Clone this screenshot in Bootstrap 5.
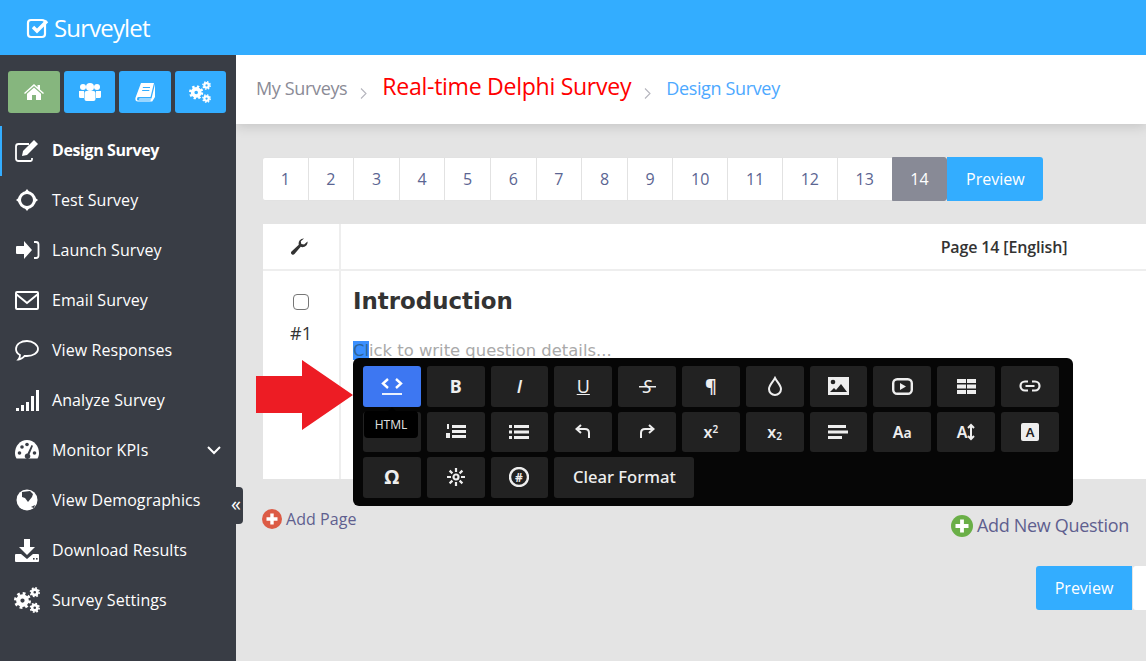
<!DOCTYPE html>
<html lang="en">
<head>
  <meta charset="UTF-8">
  <title>Surveylet</title>
  <link href="https://cdn.jsdelivr.net/npm/bootstrap@5.3.0/dist/css/bootstrap.min.css" rel="stylesheet">
  <style>
    html, body { height: 100%; }
    body {
      font-family: "Open Sans", sans-serif;
      background: #e4e4e4;
      overflow: hidden;
      color: #333;
    }
    .top-bar { height: 55px; background: #33adff; color: #fff; padding-left: 26px; }
    .brand-name { font-size: 24px; letter-spacing: -0.85px; margin-left: 4px; }
    .page-body { height: 606px; }

    .side-bar { width: 236px; background: #393d45; color: #fff; position: relative; flex-shrink: 0; }
    .side-tabs { padding: 16px 10px 13px 8px; gap: 4px; height: 71px; }
    .side-tab { width: 51.5px; height: 42px; background: #33adff; border-radius: 3px; }
    .side-tab.is-home { width: 52px; background: #86b67e; }
    .side-link { height: 50px; padding: 0 0 2px 14px; color: #fff; font-size: 16px; text-decoration: none; letter-spacing: 0.08px; }
    .side-link.is-active { border-left: 2px solid #33adff; padding-left: 12px; font-weight: 700; letter-spacing: -0.4px; }
    .side-ico { width: 26px; height: 26px; margin-right: 12px; flex-shrink: 0; }
    .side-caret { margin-left: auto; margin-right: 15px; }
    .side-handle {
      position: absolute; left: 229px; top: 432px; width: 14px; height: 37px;
      background: #393d45; border-radius: 0 4px 4px 0; font-size: 20px; line-height: 34px; text-align: center; color: #fff;
    }

    .main-area { position: relative; flex: 1; min-width: 0; overflow: hidden; }
    .crumb-bar {
      height: 69px; background: #fff; padding-left: 20px;
      box-shadow: 0 2px 12px rgba(0,0,0,.15);
    }
    .crumb-muted { font-size: 18px; color: #8b8b96; letter-spacing: -0.35px; margin-bottom: 2px; }
    .crumb-sep { margin: 8px 15px 0 13px; }
    .crumb-title { font-size: 23.1px; color: #f00; letter-spacing: -0.3px; margin: 0 0 6px 0; }
    .crumb-here { font-size: 18px; color: #4da9ff; letter-spacing: -0.35px; margin-bottom: 2px; }

    .pager-row { padding: 33px 0 0 26px; }
    .pager-row .pagination { margin: 0; --bs-pagination-border-radius: 3px; }
    .pager-row .page-link {
      width: 46.6px; height: 44px; padding: 0; line-height: 42px; text-align: center;
      color: #5b6592; border-color: #e2e2e2; font-size: 16px;
    }
    .pager-row .page-item.is-wide .page-link { width: 55.8px; }
    .pager-row .page-item.active .page-link { background: #888a96; border-color: #888a96; color: #fff; }
    .preview-btn {
      height: 44px; width: 96px; background: #33adff; color: #fff; font-size: 16px; border: 0;
      border-radius: 0 3px 3px 0; padding: 0;
    }
    .preview-btn.is-left { border-radius: 3px 0 0 3px; }

    .survey-table { margin: 23px 0 0 27px; width: 1404px; height: 255px; background: #fff; }
    .survey-head { height: 47px; border-bottom: 2px solid #eee; }
    .survey-col { width: 78px; border-right: 2px solid #eee; flex-shrink: 0; }
    .wrench-ico { margin-right: 4px; }
    .survey-page { font-size: 16px; font-weight: 600; color: #333; letter-spacing: -0.15px; }
    .survey-row { height: 208px; }
    .survey-check { width: 16px; height: 16px; margin: 23px 0 0 0; border-color: #767676; border-radius: 3px; }
    .survey-num { font-size: 18px; color: #333; margin-top: 9px; line-height: 28px; }
    .question-cell { padding: 14px 0 0 12px; font-family: "DejaVu Sans", sans-serif; }
    .question-title { font-size: 22.9px; font-weight: 700; color: #333; line-height: 32px; margin: 0; }
    .question-hint { font-size: 16.4px; color: #a9a9a9; margin-top: 24px; line-height: 19px; }
    .question-hint span { background: #3a8fff; color: #2f6597; }

    .add-row { width: 867px; margin-left: 26px; height: 87px; }
    .add-link { color: #5f5f8f; text-decoration: none; display: flex; align-items: center; }
    .add-page { font-size: 16px; margin-top: 28px; letter-spacing: 0.05px; }
    .add-question { font-size: 18px; margin-top: 33px; letter-spacing: -0.3px; }
    .foot-row { padding-left: 800px; }
    .foot-blank { width: 90px; height: 44px; background: #fff; margin-left: 1px; border-radius: 3px; flex-shrink: 0; }

    .editor-pop {
      position: absolute; left: 117px; top: 303px; width: 720px; height: 148px;
      background: #060606; border-radius: 6px; padding: 8px 10px; gap: 5px 6px;
      font-family: "Noto Sans", sans-serif;
    }
    .editor-btn {
      width: 57.8px; height: 40.5px; background: #222; border-radius: 3px; color: #eee; border: 0; padding: 0;
      font-size: 16px; line-height: 1; display: flex; align-items: center; justify-content: center;
    }
    .editor-btn.is-on { background: #3d77f2; color: #fff; }
    .editor-btn.is-text { width: 140px; font-weight: 500; font-size: 16.6px; }
    .editor-btn.is-big { font-size: 18px; }
    .editor-btn.is-slant { font-family: "Open Sans", sans-serif; font-style: italic; font-weight: 600; font-size: 18px; }
    .editor-btn sup, .editor-btn sub { font-size: 10px; }
    .strike-pad { padding: 0 4px; font-style: italic; background: linear-gradient(#eee, #eee) center / 100% 1.5px no-repeat; }
    .editor-tip {
      position: absolute; left: 11px; top: 53px; width: 54px; height: 27px; background: #000; border-radius: 4px;
      color: #ddd; font-size: 12px; line-height: 27px; text-align: center;
    }
    .editor-tip::before {
      content: ""; position: absolute; left: 24px; top: -4px;
      border: 4px solid transparent; border-top: 0; border-bottom-color: #000;
    }
    .red-arrow { position: absolute; left: 19px; top: 304px; }
  </style>
</head>
<body>

  <svg width="0" height="0" class="position-absolute">
    <defs>
      <symbol id="gear" viewBox="0 0 24 24">
        <circle cx="12" cy="12" r="6" fill="none" stroke="currentColor" stroke-width="6"/>
        <circle cx="12" cy="12" r="10" fill="none" stroke="currentColor" stroke-width="4" stroke-dasharray="3.9 3.95"/>
      </symbol>
      <symbol id="cogs" viewBox="0 0 26 26">
        <use href="#gear" x="0" y="5" width="17" height="17"/>
        <use href="#gear" x="15.500" y="0" width="10.500" height="10.500"/>
        <use href="#gear" x="15.500" y="15.500" width="10.500" height="10.500"/>
      </symbol>
      <symbol id="chevron" viewBox="0 0 7 11">
        <path d="M1 .5L6 5.500 1 10.500" fill="none" stroke="#b5b5bd" stroke-width="1.100"/>
      </symbol>
    </defs>
  </svg>

  <header class="top-bar d-flex align-items-center">
    <svg width="24" height="24" viewBox="0 0 24 24" fill="none" stroke="#fff" stroke-width="2.2">
      <rect x="2" y="4" width="17" height="17" rx="3"/>
      <path d="M7 11l4 4 10-10" stroke-width="3.4"/>
    </svg>
    <span class="brand-name">Surveylet</span>
  </header>

  <div class="page-body d-flex">
    <aside class="side-bar">
      <div class="side-tabs d-flex">
        <div class="side-tab is-home d-flex align-items-center justify-content-center">
          <svg width="20" height="18" viewBox="0 0 20 18" fill="#fff"><path d="M10 1L0 10l1 1 9-8 9 8 1-1-4-3.6V2h-2.500v2.200z"/><path d="M10 4.500L3 10.700V17h5v-5h4v5h5v-6.300z"/></svg>
        </div>
        <div class="side-tab d-flex align-items-center justify-content-center">
          <svg width="22" height="20" viewBox="0 0 22 20" fill="#fff"><circle cx="4" cy="5" r="3"/><circle cx="18" cy="5" r="3"/><circle cx="11" cy="5" r="4"/><path d="M0 9h5v7H1.500Q0 16 0 14.500zM22 9h-5v7h3.500q1.500 0 1.500-1.500z"/><path d="M5.500 11q0-2 2-2h7q2 0 2 2v6q0 2-2 2h-7q-2 0-2-2z"/></svg>
        </div>
        <div class="side-tab d-flex align-items-center justify-content-center">
          <svg width="20" height="20" viewBox="0 0 20 20" fill="#fff"><path d="M6 1h13l-3.500 14H3.500q-1.500 0-1.500 2t1.500 1.500h12l.5-1H4.500q-.7 0-.5-.5t.7-.5H16.500L20 2v13l-2.800 4.500H3q-3 0-2.600-3.500z"/><path d="M8 5h7v1H7.700zM7.300 8h7v1H7z" fill="#33adff"/></svg>
        </div>
        <div class="side-tab d-flex align-items-center justify-content-center">
          <svg width="22" height="22" color="#fff"><use href="#cogs" width="22" height="22"/></svg>
        </div>
      </div>

      <a class="side-link is-active d-flex align-items-center" href="#">
        <svg class="side-ico" viewBox="0 0 26 26" fill="none" stroke="#fff" stroke-width="1.800"><path d="M18 21v1.500q0 1.500-1.500 1.500h-12Q2 24 2 21.500v-12Q2 7 4.500 7H15"/><path d="M9 14l-1 5 5-1L24 7l-4-4z" fill="#fff" stroke="none"/></svg>
        Design Survey
      </a>
      <a class="side-link d-flex align-items-center" href="#">
        <svg class="side-ico" viewBox="0 0 26 26" fill="none" stroke="#fff" stroke-width="3"><circle cx="13" cy="13" r="7.500"/><path d="M13 2l4 5H9zM13 24l4-5H9zM2 13l5 4V9zM24 13l-5 4V9z" fill="#fff" stroke="none"/></svg>
        Test Survey
      </a>
      <a class="side-link d-flex align-items-center" href="#">
        <svg class="side-ico" viewBox="0 0 26 26" fill="#fff"><path d="M3 9h7V4l8 9-8 9v-5H3q-1 0-1-1v-6q0-1 1-1z"/><path d="M20 5h2q2.500 0 2.500 2.500v11q0 2.500-2.500 2.500h-2" fill="none" stroke="#fff" stroke-width="1.800"/></svg>
        Launch Survey
      </a>
      <a class="side-link d-flex align-items-center" href="#">
        <svg class="side-ico" viewBox="0 0 26 26" fill="none" stroke="#fff" stroke-width="2"><rect x="2" y="5" width="22" height="17" rx="1"/><path d="M2 7l11 9 11-9"/></svg>
        Email Survey
      </a>
      <a class="side-link d-flex align-items-center" href="#">
        <svg class="side-ico" viewBox="0 0 26 26" fill="none" stroke="#fff" stroke-width="1.800"><path d="M13 4C7 4 2 7 2 12c0 3 2 5 4 6 0 2-1 4-1.500 4.500 2 0 5-2 6-3.500h2.500c6 0 11-3 11-7s-5-8-11-8z"/></svg>
        View Responses
      </a>
      <a class="side-link d-flex align-items-center" href="#">
        <svg class="side-ico" viewBox="0 0 26 26" fill="#fff"><rect x="2" y="21" width="3" height="3"/><rect x="7" y="18" width="3" height="6"/><rect x="12" y="15" width="3" height="9"/><rect x="17" y="9" width="3" height="15"/><rect x="22" y="3" width="3" height="21"/></svg>
        Analyze Survey
      </a>
      <a class="side-link d-flex align-items-center" href="#">
        <svg class="side-ico" viewBox="0 0 26 26" fill="#fff"><path d="M13 3C6 3 1 9 1 16c0 2 .5 4 1.500 5.500h21C24.500 20 25 18 25 16 25 9 20 3 13 3z"/><g fill="#393d45"><circle cx="5.500" cy="16" r="1.800"/><circle cx="8" cy="10" r="1.800"/><circle cx="13" cy="7.500" r="1.800"/><circle cx="20.500" cy="16" r="1.800"/><path d="M17.500 8l1.500.7-3.500 8.500a2.800 2.800 0 1 1-2-.8z"/></g></svg>
        Monitor KPIs
        <svg class="side-caret" width="14" height="9" viewBox="0 0 14 9" fill="none" stroke="#fff" stroke-width="2"><path d="M1 1l6 6 6-6"/></svg>
      </a>
      <a class="side-link d-flex align-items-center" href="#">
        <svg class="side-ico" viewBox="0 0 26 26"><circle cx="13" cy="13" r="10.500" fill="#fff"/><path d="M8 5l8-1 3 3-1 3-4 5-3-4-3-1zM17 20l4-2-1 3z" fill="#393d45"/></svg>
        View Demographics
      </a>
      <a class="side-link d-flex align-items-center" href="#">
        <svg class="side-ico" viewBox="0 0 26 26" fill="#fff"><path d="M10 2h6v8h5l-8 8-8-8h5z"/><path d="M2 17h5l6 5 6-5h5q1 0 1 1v6q0 1-1 1H2q-1 0-1-1v-6q0-1 1-1z"/><g fill="#393d45"><rect x="19" y="21" width="1.600" height="1.600"/><rect x="22" y="21" width="1.600" height="1.600"/></g></svg>
        Download Results
      </a>
      <a class="side-link d-flex align-items-center" href="#">
        <svg class="side-ico" color="#fff"><use href="#cogs" width="26" height="26"/></svg>
        Survey Settings
      </a>
      <div class="side-handle">«</div>
    </aside>

    <main class="main-area">
      <div class="crumb-bar d-flex align-items-center">
        <span class="crumb-muted">My Surveys</span>
        <svg class="crumb-sep" width="7" height="11"><use href="#chevron" width="7" height="11"/></svg>
        <span class="crumb-title">Real-time Delphi Survey</span>
        <svg class="crumb-sep" width="7" height="11"><use href="#chevron" width="7" height="11"/></svg>
        <span class="crumb-here">Design Survey</span>
      </div>

      <div class="pager-row d-flex">
        <ul class="pagination">
          <li class="page-item"><a class="page-link" href="#">1</a></li>
          <li class="page-item"><a class="page-link" href="#">2</a></li>
          <li class="page-item"><a class="page-link" href="#">3</a></li>
          <li class="page-item"><a class="page-link" href="#">4</a></li>
          <li class="page-item"><a class="page-link" href="#">5</a></li>
          <li class="page-item"><a class="page-link" href="#">6</a></li>
          <li class="page-item"><a class="page-link" href="#">7</a></li>
          <li class="page-item"><a class="page-link" href="#">8</a></li>
          <li class="page-item"><a class="page-link" href="#">9</a></li>
          <li class="page-item is-wide"><a class="page-link" href="#">10</a></li>
          <li class="page-item is-wide"><a class="page-link" href="#">11</a></li>
          <li class="page-item is-wide"><a class="page-link" href="#">12</a></li>
          <li class="page-item is-wide"><a class="page-link" href="#">13</a></li>
          <li class="page-item is-wide active"><a class="page-link" href="#">14</a></li>
        </ul>
        <button class="preview-btn" type="button">Preview</button>
      </div>

      <div class="survey-table">
        <div class="survey-head d-flex">
          <div class="survey-col d-flex align-items-center justify-content-center">
            <svg class="wrench-ico" width="17" height="17" viewBox="0 0 17 17" fill="#333"><path d="M16.500 3.500a5 5 0 0 1-6.800 5.300L3.500 16a1.800 1.800 0 0 1-3-2.500L7.800 6.800A5 5 0 0 1 13 .5L9.800 3.300l.5 2.600 2.800.7z"/></svg>
          </div>
          <div class="flex-grow-1 d-flex align-items-center justify-content-center survey-page">Page 14 [English]</div>
        </div>
        <div class="survey-row d-flex">
          <div class="survey-col d-flex flex-column align-items-center">
            <input class="form-check-input survey-check" type="checkbox" aria-label="Select question">
            <div class="survey-num">#1</div>
          </div>
          <div class="question-cell flex-grow-1">
            <h2 class="question-title">Introduction</h2>
            <div class="question-hint"><span>Cl</span>ick to write question details...</div>
          </div>
        </div>
      </div>

      <div class="add-row d-flex justify-content-between align-items-start">
        <a class="add-link add-page" href="#">
          <svg class="me-1" width="20" height="20" viewBox="0 0 20 20"><circle cx="10" cy="10" r="10" fill="#dc5b45"/><path d="M10 4.500v11M4.500 10h11" stroke="#fff" stroke-width="3.400"/></svg>
          Add Page
        </a>
        <a class="add-link add-question" href="#">
          <svg class="me-1" width="22" height="22" viewBox="0 0 22 22"><circle cx="11" cy="11" r="11" fill="#6aaf47"/><path d="M11 4.500v13M4.500 11h13" stroke="#fff" stroke-width="3.800"/></svg>
          Add New Question
        </a>
      </div>

      <div class="foot-row d-flex">
        <button class="preview-btn is-left flex-shrink-0" type="button">Preview</button>
        <div class="foot-blank"></div>
      </div>

      <!-- floating editor toolbar -->
      <svg class="red-arrow" width="99" height="72" viewBox="0 0 99 72"><path d="M1 17h46V1l51 35-51 35V54H1z" fill="#ed1c24"/></svg>
      <div class="editor-pop d-flex flex-wrap align-content-start">
        <button class="editor-btn is-on" type="button" aria-label="HTML">
          <svg width="22" height="20" viewBox="0 0 22 20" fill="none" stroke="#fff" stroke-width="2.400"><path d="M7 3L2 7.500 7 12M15 3l5 4.500-5 4.500"/><path d="M1 18h20" stroke-width="1.800"/></svg>
        </button>
        <button class="editor-btn is-big fw-bold" type="button">B</button>
        <button class="editor-btn is-slant" type="button">I</button>
        <button class="editor-btn is-big text-decoration-underline" type="button">U</button>
        <button class="editor-btn is-big" type="button"><span class="strike-pad">S</span></button>
        <button class="editor-btn is-big fw-bold" type="button">¶</button>
        <button class="editor-btn" type="button" aria-label="Colour">
          <svg width="16" height="20" viewBox="0 0 16 20" fill="none" stroke="#eee" stroke-width="2"><path d="M8 2c2 4 6 7 6 11a6 6 0 0 1-12 0c0-4 4-7 6-11z"/></svg>
        </button>
        <button class="editor-btn" type="button" aria-label="Image">
          <svg width="21" height="18" viewBox="0 0 21 18"><rect width="21" height="18" fill="#eee"/><circle cx="5" cy="5" r="2.300" fill="#222"/><path d="M2 15l4-4 2 2 5-6 6 8z" fill="#222"/></svg>
        </button>
        <button class="editor-btn" type="button" aria-label="Video">
          <svg width="21" height="17" viewBox="0 0 21 17" fill="none" stroke="#eee" stroke-width="2.400"><rect x="1.200" y="1.200" width="18.600" height="14.600" rx="4"/><path d="M8 5l6 3.500L8 12z" fill="#eee" stroke="none"/></svg>
        </button>
        <button class="editor-btn" type="button" aria-label="Table">
          <svg width="19" height="15" viewBox="0 0 19 15" fill="#eee"><rect width="9" height="4"/><rect x="10" width="9" height="4"/><rect y="5.500" width="9" height="4"/><rect x="10" y="5.500" width="9" height="4"/><rect y="11" width="9" height="4"/><rect x="10" y="11" width="9" height="4"/></svg>
        </button>
        <button class="editor-btn" type="button" aria-label="Link">
          <svg width="22" height="12" viewBox="0 0 22 12" fill="none" stroke="#eee" stroke-width="2.200"><path d="M9 1.500H6a4.500 4.500 0 0 0 0 9h3M13 1.500h3a4.500 4.500 0 0 1 0 9h-3M6.500 6h9"/></svg>
        </button>

        <button class="editor-btn" type="button" aria-label="Paragraph"></button>
        <button class="editor-btn" type="button" aria-label="Ordered list">
          <svg width="20" height="15" viewBox="0 0 20 15" fill="#eee"><rect x="6" y="1" width="14" height="3"/><rect x="6" y="6" width="14" height="3"/><rect x="6" y="11" width="14" height="3"/><rect x="1" y="0" width="2" height="5"/><rect x="0" y="9" width="4" height="5"/></svg>
        </button>
        <button class="editor-btn" type="button" aria-label="Bullet list">
          <svg width="20" height="14" viewBox="0 0 20 14" fill="#eee"><rect x="5" y="0" width="15" height="3"/><rect x="5" y="5.500" width="15" height="3"/><rect x="5" y="11" width="15" height="3"/><rect y="0" width="3" height="3"/><rect y="5.500" width="3" height="3"/><rect y="11" width="3" height="3"/></svg>
        </button>
        <button class="editor-btn" type="button" aria-label="Undo">
          <svg width="16" height="15" viewBox="0 0 16 15" fill="none" stroke="#eee" stroke-width="2"><path d="M6 1L1.500 5 6 9M2 5h8q4 0 4 4v5"/></svg>
        </button>
        <button class="editor-btn" type="button" aria-label="Redo">
          <svg width="16" height="15" viewBox="0 0 16 15" fill="none" stroke="#eee" stroke-width="2"><path d="M10 1l4.500 4L10 9M14 5H6q-4 0-4 4v5"/></svg>
        </button>
        <button class="editor-btn fw-semibold" type="button"><span>x<sup>2</sup></span></button>
        <button class="editor-btn fw-semibold" type="button"><span>x<sub>2</sub></span></button>
        <button class="editor-btn" type="button" aria-label="Align">
          <svg width="20" height="14" viewBox="0 0 20 14" fill="#eee"><rect width="18" height="3"/><rect y="5.500" width="20" height="3"/><rect y="11" width="14" height="3"/></svg>
        </button>
        <button class="editor-btn fw-semibold" type="button"><span>A<small>a</small></span></button>
        <button class="editor-btn fw-semibold" type="button">
          A<svg width="8" height="18" viewBox="0 0 8 18" fill="none" stroke="#eee" stroke-width="2"><path d="M1 5l3-3 3 3M1 13l3 3 3-3M4 2v14"/></svg>
        </button>
        <button class="editor-btn" type="button" aria-label="Background">
          <svg width="18" height="18" viewBox="0 0 18 18"><rect width="18" height="18" rx="2" fill="#eee"/><text x="9" y="14" text-anchor="middle" font-size="13" font-weight="600" fill="#222" font-family="Noto Sans">A</text></svg>
        </button>

        <button class="editor-btn fw-bold fs-5" type="button">Ω</button>
        <button class="editor-btn" type="button" aria-label="Special">
          <svg width="18" height="18" viewBox="0 0 18 18" fill="none" stroke="#eee" stroke-width="2.200"><circle cx="9" cy="9" r="2.500"/><path d="M9 0v4M9 14v4M0 9h4M14 9h4M2.600 2.600l2.800 2.800M12.600 12.600l2.800 2.800M2.600 15.400l2.800-2.800M12.600 5.400l2.800-2.800"/></svg>
        </button>
        <button class="editor-btn" type="button" aria-label="Hash">
          <svg width="20" height="20" viewBox="0 0 20 20"><circle cx="10" cy="10" r="9" fill="none" stroke="#eee" stroke-width="2.400"/><text x="10" y="14.500" text-anchor="middle" font-size="12" font-weight="700" fill="#eee" font-family="Noto Sans">#</text></svg>
        </button>
        <button class="editor-btn is-text" type="button">Clear Format</button>

        <div class="editor-tip">HTML</div>
      </div>
    </main>
  </div>

  <script src="https://cdn.jsdelivr.net/npm/bootstrap@5.3.0/dist/js/bootstrap.bundle.min.js"></script>
</body>
</html>
